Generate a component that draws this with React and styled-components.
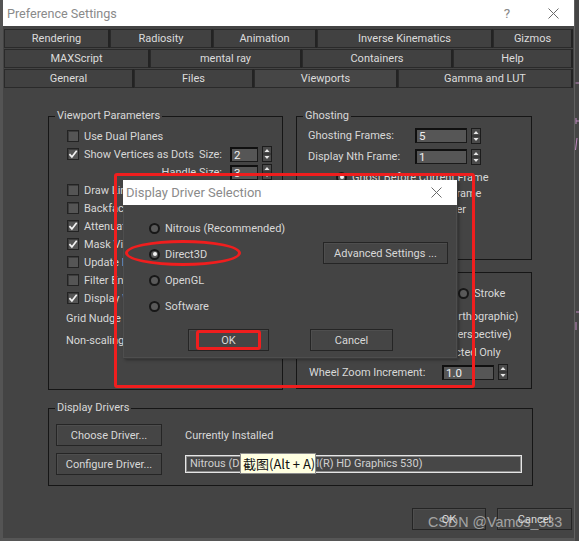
import React from 'react';
import styled, { createGlobalStyle } from 'styled-components';

const Global = createGlobalStyle`
  html, body { margin: 0; padding: 0; background: #444; }
  body { width: 579px; height: 541px; overflow: hidden; font-family: Roboto, "Noto Sans", sans-serif; }
  * { box-sizing: border-box; }
`;

const Screen = styled.div`
  position: relative;
  width: 579px;
  height: 541px;
  display: flex;
  background: #454545;
  overflow: hidden;
`;

const Window = styled.div`
  position: relative;
  width: 575px;
  height: 541px;
  background: #444444;
  border-left: 3px solid #545454;
  border-right: 1px solid #606060;
  border-bottom: 3px solid #565656;
  display: flex;
  flex-direction: column;
  color: #d8d8d8;
  font-size: 11px;
`;

const Strip = styled.div`
  width: 4px;
  height: 541px;
  background: #454545;
`;

const TitleBar = styled.div`
  height: 26px;
  flex: none;
  background: #ffffff;
  display: flex;
  align-items: center;
  padding-left: 4px;
  color: #8a8a8a;
  font-size: 12.6px;
`;

const TitleText = styled.div`
  flex: 1;
`;

const TitleHelp = styled.div`
  width: 12px;
  margin-right: 34px;
  color: #888;
  font-size: 13.5px;
  text-align: center;
`;

const TitleClose = styled.div`
  width: 12px;
  height: 12px;
  margin-right: 15px;
  display: flex;
  align-items: center;
  justify-content: center;
`;

const Tabs = styled.div`
  margin: 3px 1px 0 1px;
  display: flex;
  flex-direction: column;
  gap: 1px;
`;

const TabRow = styled.div`
  display: flex;
  height: 19px;
`;

const Tab = styled.div`
  width: ${p => p.$w}px;
  flex: none;
  height: 19px;
  background: ${p => (p.$active ? '#464646' : '#414141')};
  border: 1px solid #2a2a2a;
  border-right: 2px solid #232323;
  color: #dcdcdc;
  font-size: 11px;
  line-height: 17px;
  text-align: center;
  white-space: nowrap;
`;

const Panel = styled.div`
  flex: 1;
  display: flex;
  flex-direction: column;
  padding: 28px 0 0 45px;
`;

const TopGrid = styled.div`
  display: grid;
  grid-template-columns: 235px 236px;
  column-gap: 13px;
  align-items: start;
`;

const RightCol = styled.div`
  display: flex;
  flex-direction: column;
  gap: 12px;
`;

const Group = styled.div`
  position: relative;
  width: ${p => p.$w}px;
  height: ${p => p.$h}px;
  margin-top: ${p => p.$mt || 0}px;
  border: 1px solid #161616;
  padding: ${p => p.$pad || '0'};
  display: flex;
  flex-direction: column;
`;

const Legend = styled.span`
  position: absolute;
  top: -8px;
  left: 6px;
  padding: 0 2px;
  background: #444444;
  line-height: 14px;
  color: #d8d8d8;
  white-space: nowrap;
`;

const Row = styled.div`
  height: ${p => p.$h || 18}px;
  flex: none;
  display: flex;
  align-items: center;
  padding-left: ${p => p.$pl || 0}px;
  margin-top: ${p => p.$mt || 0}px;
  white-space: nowrap;
`;

const BoxCheck = styled.span`
  width: 12px;
  height: 12px;
  flex: none;
  margin-right: 5px;
  border: 1px solid #232323;
  background: #555555;
  box-shadow: inset 1px 1px 0 #3c3c3c;
  display: flex;
  align-items: center;
  justify-content: center;
`;

const RadioDot = styled.span`
  width: 11px;
  height: 11px;
  flex: none;
  margin-right: 5px;
  border-radius: 50%;
  border: 2px solid #181818;
  background: #5a5a5a;
  display: flex;
  align-items: center;
  justify-content: center;
  &::after {
    content: '';
    width: 4px;
    height: 4px;
    border-radius: 50%;
    background: ${p => (p.$on ? '#f4f4f4' : 'transparent')};
  }
`;

const SpinGroup = styled.div`
  margin-left: auto;
  margin-right: 10px;
  display: flex;
  align-items: center;
  gap: 4px;
`;

const SpinLabel = styled.span`
  margin-right: 4px;
`;

const FieldGrid = styled.div`
  display: grid;
  grid-template-columns: ${p => p.$label}px 52px 10px;
  column-gap: 4px;
  align-items: center;
  height: ${p => p.$h || 21}px;
  padding-left: ${p => p.$pl || 0}px;
  margin-top: ${p => p.$mt || 0}px;
  white-space: nowrap;
`;

const Field = styled.div`
  width: ${p => p.$w || 52}px;
  height: 15px;
  background: #565656;
  border: 1px solid #1a1a1a;
  border-top: 2px solid #101010;
  border-left: 2px solid #101010;
  color: #f0f0f0;
  font-size: 11.5px;
  line-height: 12px;
  padding-left: 2px;
`;

const MouseRow = styled.div`
  display: grid;
  grid-template-columns: 149px auto;
  align-items: center;
  height: 18px;
  padding-left: 12px;
  white-space: nowrap;
`;

const Inline = styled.div`
  display: flex;
  align-items: center;
  white-space: nowrap;
`;

const Drivers = styled.div`
  display: grid;
  grid-template-columns: 106px 337px;
  grid-template-rows: 22px 22px;
  column-gap: 23px;
  row-gap: 7px;
  align-items: center;
`;

const Button = styled.div`
  width: ${p => p.$w}px;
  height: ${p => p.$h || 22}px;
  flex: none;
  margin-left: ${p => (p.$push ? 'auto' : '0')};
  margin-top: ${p => p.$mt || 0}px;
  background: #454545;
  border: 1px solid #252525;
  box-shadow: inset 1px 1px 0 #4e4e4e;
  color: #d8d8d8;
  font-size: 11px;
  display: flex;
  align-items: center;
  justify-content: center;
  white-space: nowrap;
`;

const InstalledField = styled.div`
  position: relative;
  height: 18px;
  border: 1px solid #e6e6e6;
  box-shadow: inset 0 0 0 1px #8a8a8a;
  background: #474747;
  color: #d0d0d0;
  padding-left: 4px;
  line-height: 16px;
  white-space: nowrap;
`;

const Tooltip = styled.div`
  position: absolute;
  left: 54px;
  top: -3px;
  width: 76px;
  height: 21px;
  background: #ffffe1;
  border: 1px solid #8c8c8c;
  color: #111;
  font-size: 13px;
  line-height: 19px;
  padding-left: 2px;
  font-family: "Noto Sans CJK SC", sans-serif;
  white-space: nowrap;
`;

const BottomBar = styled.div`
  margin-top: 22px;
  margin-right: 2px;
  margin-left: -45px;
  display: flex;
  justify-content: flex-end;
  gap: 11px;
`;

/* Dialog overlay */
const Dialog = styled.div`
  position: absolute;
  left: 120px;
  top: 180px;
  width: 334px;
  height: 178px;
  background: #444444;
  box-shadow: 1px 1px 0 #3a3a3a, 2px 2px 3px rgba(0, 0, 0, 0.35);
  border: 1px solid #4e4e4e;
  border-top: none;
  display: flex;
  flex-direction: column;
  color: #d8d8d8;
  font-size: 11px;
`;

const DialogTitle = styled.div`
  height: 25px;
  flex: none;
  background: #ffffff;
  display: flex;
  align-items: center;
  padding-left: 3px;
  color: #8a8a8a;
  font-size: 13px;
  margin: 0 -1px;
`;

const DialogBody = styled.div`
  display: flex;
  padding: 10px 8px 0 25px;
`;

const RadioCol = styled.div`
  display: flex;
  flex-direction: column;
`;

const DialogButtons = styled.div`
  display: flex;
  gap: 41px;
  padding-left: 64px;
  margin-top: 10px;
`;

const RedRect = styled.div`
  position: absolute;
  left: ${p => p.$x}px;
  top: ${p => p.$y}px;
  width: ${p => p.$w}px;
  height: ${p => p.$h}px;
  border: 3px solid #f01e1e;
  border-radius: ${p => p.$r};
  pointer-events: none;
`;

const Watermark = styled.div`
  position: absolute;
  left: 428px;
  top: 514px;
  font-family: "Liberation Sans", Arial, sans-serif;
  font-size: 14.3px;
  color: rgba(225, 225, 225, 0.62);
  white-space: nowrap;
`;

const Check = ({ on }) => (
  <BoxCheck>
    {on && (
      <svg width="10" height="10" viewBox="0 0 10 10">
        <path d="M1.4 5.2 L3.9 7.9 L8.7 1.7" fill="none" stroke="#f2f2f2" strokeWidth="1.7" />
      </svg>
    )}
  </BoxCheck>
);

const Spinner = () => (
  <svg width="10" height="16" viewBox="0 0 10 16">
    <rect x="0.5" y="0.5" width="9" height="15" fill="#4a4a4a" stroke="#1c1c1c" />
    <line x1="1" y1="8" x2="9" y2="8" stroke="#2a2a2a" />
    <path d="M2.5 6 L5 3 L7.5 6 Z" fill="#e8e8e8" />
    <path d="M2.5 10 L5 13 L7.5 10 Z" fill="#e8e8e8" />
  </svg>
);

const XIcon = ({ size = 11, color = '#6a6a6a' }) => (
  <svg width={size} height={size} viewBox="0 0 11 11">
    <path d="M0.5 0.5 L10.5 10.5 M10.5 0.5 L0.5 10.5" stroke={color} strokeWidth="1" />
  </svg>
);

const tabRows = [
  [['Rendering', 106], ['Radiosity', 103], ['Animation', 104], ['Inverse Kinematics', 176], ['Gizmos', 80]],
  [['MAXScript', 146], ['mental ray', 152], ['Containers', 151], ['Help', 120]],
  [['General', 130], ['Files', 120], ['Viewports', 144, true], ['Gamma and LUT', 175]],
];

const vpChecks = [
  ['Draw Links as Lines', false],
  ['Backface Cull on Object Creation', false],
  ['Attenuate Lights', true],
  ['Mask Viewport to Safe Region', true],
  ['Update Background Image While Playing', false],
  ['Filter Environment Backgrounds', false],
  ['Display World Axis', true],
];

const mouseChecks = [
  ['Zoom About Mouse Point (Orthographic)', true],
  ['Zoom About Mouse Point (Perspective)', false],
  ['Orbit/Pan/Zoom About Selected Only', false],
];

export default function App() {
  return (
    <>
      <Global />
      <Screen>
        <Window>
          <TitleBar>
            <TitleText>Preference Settings</TitleText>
            <TitleHelp>?</TitleHelp>
            <TitleClose>
              <XIcon size={11} />
            </TitleClose>
          </TitleBar>

          <Tabs>
            {tabRows.map((row, i) => (
              <TabRow key={i}>
                {row.map(([label, w, active]) => (
                  <Tab key={label} $w={w} $active={active}>
                    {label}
                  </Tab>
                ))}
              </TabRow>
            ))}
          </Tabs>

          <Panel>
            <TopGrid>
              <Group $w={235} $h={274} $pad="10px 0 0 0">
                <Legend>Viewport Parameters</Legend>
                <Row $pl={18}>
                  <Check />
                  Use Dual Planes
                </Row>
                <Row $pl={18}>
                  <Check on />
                  Show Vertices as Dots
                  <SpinGroup>
                    <SpinLabel>Size:</SpinLabel>
                    <Field $w={28}>2</Field>
                    <Spinner />
                  </SpinGroup>
                </Row>
                <Row $pl={18}>
                  <SpinGroup>
                    <SpinLabel>Handle Size:</SpinLabel>
                    <Field $w={28}>3</Field>
                    <Spinner />
                  </SpinGroup>
                </Row>
                {vpChecks.map(([label, on]) => (
                  <Row key={label} $pl={18}>
                    <Check on={on} />
                    {label}
                  </Row>
                ))}
                <Row $pl={17} $h={22}>Grid Nudge Distance:</Row>
                <Row $pl={17} $h={22}>Non-scaling Object Size:</Row>
              </Group>

              <RightCol>
                <Group $w={236} $h={144} $pad="8px 0 0 0">
                  <Legend>Ghosting</Legend>
                  <FieldGrid $label={103} $pl={11}>
                    <span>Ghosting Frames:</span>
                    <Field>5</Field>
                    <Spinner />
                  </FieldGrid>
                  <FieldGrid $label={103} $pl={11}>
                    <span>Display Nth Frame:</span>
                    <Field>1</Field>
                    <Spinner />
                  </FieldGrid>
                  <Row $pl={39} $h={16} $mt={2}>
                    <RadioDot $on />
                    Ghost Before Current Frame
                  </Row>
                  <Row $pl={40} $h={16}>
                    <RadioDot />
                    Ghost After Current Frame
                  </Row>
                  <Row $pl={41} $h={16}>
                    <RadioDot />
                    Ghost Before and After
                  </Row>
                </Group>

                <Group $w={236} $h={117} $pad="11px 0 0 0">
                  <Legend>Mouse Control</Legend>
                  <MouseRow>
                    <Inline>
                      Middle Button:&nbsp;&nbsp;
                      <RadioDot $on />
                      Pan/Zoom
                    </Inline>
                    <Inline>
                      <RadioDot />
                      Stroke
                    </Inline>
                  </MouseRow>
                  {mouseChecks.map(([label, on], i) => (
                    <Row key={label} $pl={5} $mt={i === 0 ? 5 : 0}>
                      <Check on={on} />
                      {label}
                    </Row>
                  ))}
                  <FieldGrid $label={129} $pl={12} $h={22}>
                    <span>Wheel Zoom Increment:</span>
                    <Field>1.0</Field>
                    <Spinner />
                  </FieldGrid>
                </Group>
              </RightCol>
            </TopGrid>

            <Group $w={485} $h={78} $pad="15px 0 0 7px" $mt={18}>
              <Legend>Display Drivers</Legend>
              <Drivers>
                <Button $w={106}>Choose Driver...</Button>
                <span>Currently Installed</span>
                <Button $w={106}>Configure Driver...</Button>
                <InstalledField>
                  Nitrous (Direct3D 11 - Intel(R) HD Graphics 530)
                  <Tooltip>截图(Alt + A)</Tooltip>
                </InstalledField>
              </Drivers>
            </Group>

            <BottomBar>
              <Button $w={74}>OK</Button>
              <Button $w={75}>Cancel</Button>
            </BottomBar>
          </Panel>

          <Dialog>
            <DialogTitle>
              <TitleText>Display Driver Selection</TitleText>
              <TitleClose>
                <XIcon size={11} />
              </TitleClose>
            </DialogTitle>
            <DialogBody>
              <RadioCol>
                <Row $h={26}>
                  <RadioDot />
                  Nitrous (Recommended)
                </Row>
                <Row $h={26}>
                  <RadioDot $on />
                  Direct3D
                </Row>
                <Row $h={26}>
                  <RadioDot />
                  OpenGL
                </Row>
                <Row $h={26}>
                  <RadioDot />
                  Software
                </Row>
              </RadioCol>
              <Button $w={125} $push $mt={27}>
                Advanced Settings ...
              </Button>
            </DialogBody>
            <DialogButtons>
              <Button $w={81}>OK</Button>
              <Button $w={83}>Cancel</Button>
            </DialogButtons>
          </Dialog>
        </Window>
        <Strip>
          <svg width="4" height="541" viewBox="0 0 4 541">
            <path d="M0.5 83 H4 M1 118 V124 M1 121 H4 M0.5 150 L2 138 M1 312 H4 M1 322 V330" stroke="#c08ac0" strokeWidth="1" fill="none" />
          </svg>
        </Strip>

        <RedRect $x={114} $y={173} $w={361} $h={215} $r="3px" />
        <RedRect $x={125} $y={240} $w={116} $h={26} $r="50%" />
        <RedRect $x={196} $y={330} $w={65} $h={20} $r="3px" />
        <Watermark>CSDN @Vamos_333</Watermark>
      </Screen>
    </>
  );
}
